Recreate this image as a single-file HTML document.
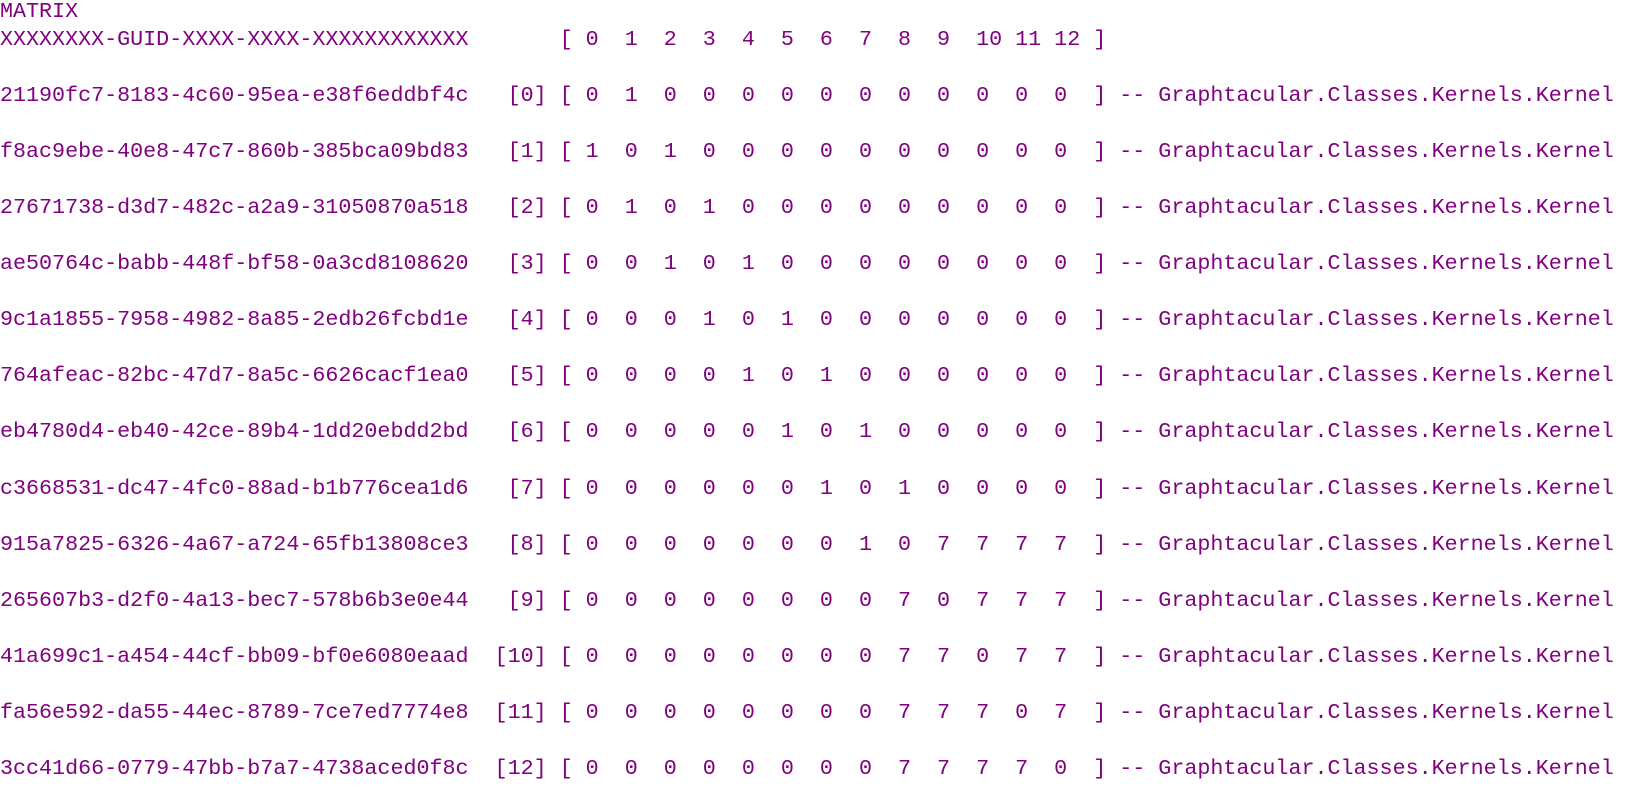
<!DOCTYPE html>
<html><head><style>
html,body{margin:0;padding:0;background:#fff;width:1629px;height:792px;overflow:hidden}
pre{margin:0;position:absolute;left:0;top:-2px;font-family:"Liberation Mono",monospace;font-size:21.7px;line-height:28.03px;color:#800080}
</style></head><body>
<pre>MATRIX
XXXXXXXX-GUID-XXXX-XXXX-XXXXXXXXXXXX       [ 0  1  2  3  4  5  6  7  8  9  10 11 12 ]

21190fc7-8183-4c60-95ea-e38f6eddbf4c   [0] [ 0  1  0  0  0  0  0  0  0  0  0  0  0  ] -- Graphtacular.Classes.Kernels.Kernel

f8ac9ebe-40e8-47c7-860b-385bca09bd83   [1] [ 1  0  1  0  0  0  0  0  0  0  0  0  0  ] -- Graphtacular.Classes.Kernels.Kernel

27671738-d3d7-482c-a2a9-31050870a518   [2] [ 0  1  0  1  0  0  0  0  0  0  0  0  0  ] -- Graphtacular.Classes.Kernels.Kernel

ae50764c-babb-448f-bf58-0a3cd8108620   [3] [ 0  0  1  0  1  0  0  0  0  0  0  0  0  ] -- Graphtacular.Classes.Kernels.Kernel

9c1a1855-7958-4982-8a85-2edb26fcbd1e   [4] [ 0  0  0  1  0  1  0  0  0  0  0  0  0  ] -- Graphtacular.Classes.Kernels.Kernel

764afeac-82bc-47d7-8a5c-6626cacf1ea0   [5] [ 0  0  0  0  1  0  1  0  0  0  0  0  0  ] -- Graphtacular.Classes.Kernels.Kernel

eb4780d4-eb40-42ce-89b4-1dd20ebdd2bd   [6] [ 0  0  0  0  0  1  0  1  0  0  0  0  0  ] -- Graphtacular.Classes.Kernels.Kernel

c3668531-dc47-4fc0-88ad-b1b776cea1d6   [7] [ 0  0  0  0  0  0  1  0  1  0  0  0  0  ] -- Graphtacular.Classes.Kernels.Kernel

915a7825-6326-4a67-a724-65fb13808ce3   [8] [ 0  0  0  0  0  0  0  1  0  7  7  7  7  ] -- Graphtacular.Classes.Kernels.Kernel

265607b3-d2f0-4a13-bec7-578b6b3e0e44   [9] [ 0  0  0  0  0  0  0  0  7  0  7  7  7  ] -- Graphtacular.Classes.Kernels.Kernel

41a699c1-a454-44cf-bb09-bf0e6080eaad  [10] [ 0  0  0  0  0  0  0  0  7  7  0  7  7  ] -- Graphtacular.Classes.Kernels.Kernel

fa56e592-da55-44ec-8789-7ce7ed7774e8  [11] [ 0  0  0  0  0  0  0  0  7  7  7  0  7  ] -- Graphtacular.Classes.Kernels.Kernel

3cc41d66-0779-47bb-b7a7-4738aced0f8c  [12] [ 0  0  0  0  0  0  0  0  7  7  7  7  0  ] -- Graphtacular.Classes.Kernels.Kernel</pre>
</body></html>
